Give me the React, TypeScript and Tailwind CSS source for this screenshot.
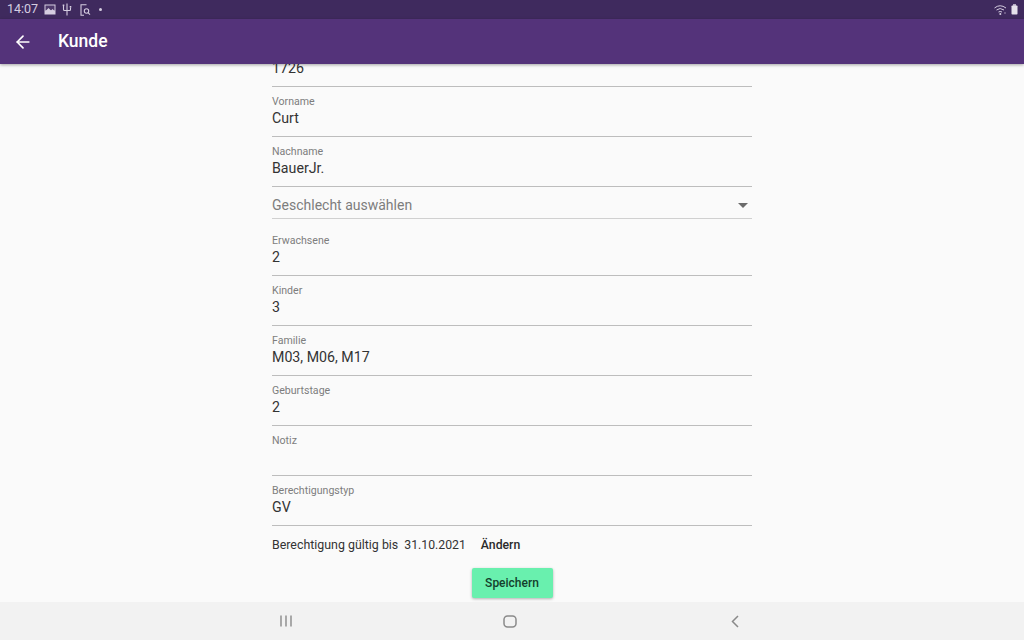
import { ArrowLeft } from "lucide-react";

function Field({ label, value }: { label: string; value: string }) {
  return (
    <div className="h-[50px] border-b-[1.5px] border-[#bdbdbd] flex flex-col pt-[8px]">
      <div className="h-[14px] text-[10.6px] leading-[14px] text-[#7d7d7d]">{label}</div>
      <div className="text-[14.2px] leading-[19px] text-[#333333] h-[19px]">{value}</div>
    </div>
  );
}

export default function App() {
  return (
    <div className="w-[1024px] h-[640px] flex flex-col overflow-hidden bg-[#fafafa] font-['Roboto',sans-serif]">
      <div className="h-[19px] shrink-0 bg-[#3f2a5e] flex items-center justify-between pl-[7px] pr-[6px] text-[#d5cde0]">
        <div className="flex items-center">
          <span className="text-[12.5px] leading-none">14:07</span>
          <svg width="12" height="11" viewBox="0 0 12 11" className="ml-[6px]">
            <rect x="0.5" y="0.5" width="11" height="10" fill="#d5cde0" />
            <rect x="1.5" y="1.5" width="9" height="5" fill="#4f3a6c" />
            <path d="M1.5 7 L4.5 4 L7 6.5 L8.5 5 L10.5 7 Z" fill="#d5cde0" />
          </svg>
          <svg width="10" height="13" viewBox="0 0 10 13" className="ml-[6px]" fill="none" stroke="#d5cde0" strokeWidth="1.1">
            <path d="M5 0.5V12.5M1.5 3V6.5Q1.5 7.5 2.5 7.5H7.5Q8.5 7.5 8.5 6.5V4.5" />
            <rect x="0.7" y="1.5" width="1.6" height="1.6" fill="#d5cde0" stroke="none" />
            <rect x="7.7" y="3" width="1.6" height="1.6" fill="#d5cde0" stroke="none" />
          </svg>
          <svg width="11" height="12" viewBox="0 0 11 12" className="ml-[8px]" fill="none" stroke="#d5cde0" strokeWidth="1.1">
            <path d="M6.5 0.8H1V11.2H4" />
            <circle cx="6.5" cy="7" r="2.2" />
            <path d="M8 8.6L10 10.6" />
          </svg>
          <span className="ml-[8px] w-[3px] h-[3px] rounded-full bg-[#d5cde0]" />
        </div>
        <div className="flex items-center gap-[3px]">
          <svg width="14" height="10" viewBox="0 0 14 10" fill="none" stroke="#d5cde0" strokeWidth="1">
            <path d="M0.5 3Q6 -1.5 12 3M2.5 5Q6 2 10 5M4.5 7Q6 6 8 7" />
            <circle cx="6.3" cy="9" r="1" fill="#d5cde0" stroke="none" />
            <circle cx="11" cy="8" r="0.8" fill="#a99cb9" stroke="none" />
          </svg>
          <svg width="7" height="11" viewBox="0 0 7 11">
            <rect x="2" y="0" width="3" height="2" fill="#b5abc3" />
            <rect x="0.5" y="1.5" width="6" height="9" rx="0.8" fill="#e6e1ec" />
          </svg>
        </div>
      </div>

      <div className="h-[45px] shrink-0 bg-[#54337a] flex items-center shadow-[0_1px_3px_rgba(0,0,0,0.35)] relative z-10 text-white">
        <ArrowLeft size={20} strokeWidth={2} className="ml-[13px]" />
        <span className="ml-[25px] text-[17.5px] font-medium">Kunde</span>
      </div>

      <div className="flex-1 min-h-0 overflow-hidden">
        <div className="w-[480px] mx-auto mt-[-27px]">
          <Field label="" value="1726" />
          <Field label="Vorname" value="Curt" />
          <Field label="Nachname" value="BauerJr." />
          <div className="h-[32px] border-b border-[#d0d0d0] flex items-center justify-between pt-[5px] pr-[4px] text-[14px] text-[#7d7d7d]">
            <span>Geschlecht auswählen</span>
            <span className="w-0 h-0 border-x-[5px] border-x-transparent border-t-[5px] border-t-[#6b6b6b]" />
          </div>
          <div className="h-[7px]" />
          <Field label="Erwachsene" value="2" />
          <Field label="Kinder" value="3" />
          <Field label="Familie" value="M03, M06, M17" />
          <Field label="Geburtstage" value="2" />
          <Field label="Notiz" value="" />
          <Field label="Berechtigungstyp" value="GV" />
          <div className="flex items-center h-[38px] text-[12.25px] text-[#333333]">
            <span className="text-[12.4px]">Berechtigung gültig bis</span>
            <span className="ml-[6px]">31.10.2021</span>
            <span className="ml-[15px] font-medium text-[#2a2a2a]">Ändern</span>
          </div>
          <div className="flex justify-center mt-[4px]">
            <button className="w-[81px] h-[30px] rounded-[2px] bg-[#69f0ae] shadow-[0_1px_3px_rgba(0,0,0,0.3)] text-[12px] font-medium text-[#14402c]">
              Speichern
            </button>
          </div>
        </div>
      </div>

      <div className="h-[38px] shrink-0 bg-[#f2f2f2] relative z-10 flex items-center justify-between pl-[280px] pr-[284px]">
        <svg width="12" height="12" viewBox="0 0 12 12" stroke="#8a8a8a" strokeWidth="1.4">
          <path d="M1 0.5V11.5M6 0.5V11.5M11 0.5V11.5" />
        </svg>
        <svg width="14" height="13" viewBox="0 0 14 13" fill="none" stroke="#8a8a8a" strokeWidth="1.5" className="-translate-x-[1px]">
          <rect x="1" y="1" width="12" height="11" rx="3.5" />
        </svg>
        <svg width="10" height="13" viewBox="0 0 10 13" fill="none" stroke="#8a8a8a" strokeWidth="1.5">
          <path d="M8 1L2.5 6.5L8 12" />
        </svg>
      </div>
    </div>
  );
}
